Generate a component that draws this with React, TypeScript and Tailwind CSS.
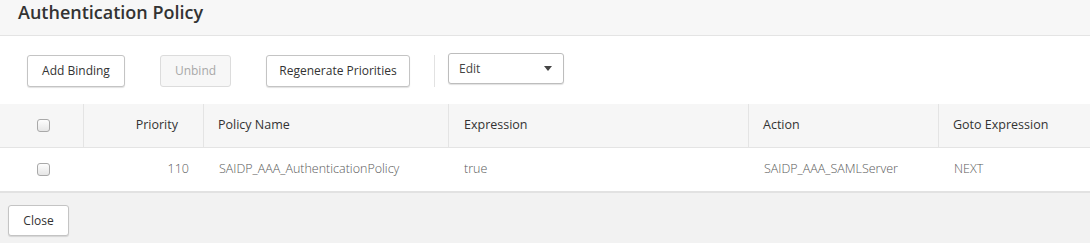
import React from "react";

const Checkbox = () => (
  <div className="w-[13px] h-[13px] rounded-[3px] border border-[#a9a9a9] bg-gradient-to-b from-[#fdfdfd] to-[#e6e6e6]" />
);

const Btn = ({ children, w, disabled }: { children: React.ReactNode; w: string; disabled?: boolean }) => (
  <div
    className={`${w} h-[32px] flex items-center justify-center rounded-[3px] border text-[12px] ${
      disabled
        ? "border-[#dcdcdc] bg-[#f7f7f7] text-[#a8a8a8]"
        : "border-[#c4c4c4] bg-white text-[#333] shadow-[0_1px_1px_rgba(0,0,0,0.12)]"
    }`}
  >
    {children}
  </div>
);

export default function App() {
  return (
    <div className="w-[1090px] h-[243px] overflow-hidden bg-white font-['Open_Sans',sans-serif] text-[#333]">
      <div className="h-[36px] bg-[#f7f7f7] border-b border-[#e4e4e4] pl-[18px]">
        <div className="text-[18px] leading-[24px] font-semibold text-[#333]">Authentication Policy</div>
      </div>
      <div className="h-[68px] flex items-start pl-[27px] pt-[19px] bg-white">
        <Btn w="w-[98px]">Add Binding</Btn>
        <div className="w-[35px]" />
        <Btn w="w-[71px]" disabled>
          Unbind
        </Btn>
        <div className="w-[35px]" />
        <Btn w="w-[144px]">Regenerate Priorities</Btn>
        <div className="ml-[24px] w-px h-[32px] bg-[#e2e2e2]" />
        <div className="ml-[13px] -mt-[2px] w-[116px] h-[31px] rounded-[3px] border border-[#bdbdbd] bg-white shadow-[0_1px_1px_rgba(0,0,0,0.12)] flex items-center justify-between pl-[10px] pr-[11px] text-[12px] text-[#444]">
          <span>Edit</span>
          <svg width="8" height="5" viewBox="0 0 8 5">
            <path d="M0 0 L8 0 L4 5 Z" fill="#444" />
          </svg>
        </div>
      </div>
      <div className="grid grid-cols-[84px_120px_245px_300px_190px_1fr] h-[44px] bg-[#f6f6f6] border-b border-[#e4e4e4] text-[12.5px] text-[#333]">
        <div className="flex items-center justify-center pl-[3px] border-r border-[#e4e4e4]">
          <Checkbox />
        </div>
        <div className="flex items-center justify-end pr-[25px] border-r border-[#e4e4e4]">Priority</div>
        <div className="flex items-center pl-[14px] border-r border-[#e4e4e4]">Policy Name</div>
        <div className="flex items-center pl-[15px] border-r border-[#e4e4e4]">Expression</div>
        <div className="flex items-center pl-[14px] border-r border-[#e4e4e4]">Action</div>
        <div className="flex items-center pl-[14px]">Goto Expression</div>
      </div>
      <div className="grid grid-cols-[84px_120px_245px_300px_190px_1fr] h-[45px] bg-white border-b-[2px] border-[#e2e2e2] text-[12.5px] font-light text-[#5a5a5a]">
        <div className="flex items-center justify-center pl-[3px]">
          <Checkbox />
        </div>
        <div className="flex items-center justify-end pr-[15px]">110</div>
        <div className="flex items-center pl-[15px]">SAIDP_AAA_AuthenticationPolicy</div>
        <div className="flex items-center pl-[15px]">true</div>
        <div className="flex items-center pl-[15px]">SAIDP_AAA_SAMLServer</div>
        <div className="flex items-center pl-[15px]">NEXT</div>
      </div>
      <div className="h-[50px] bg-[#f2f2f2] pl-[8px] pt-[12px]">
        <div className="w-[61px] h-[31px] flex items-center justify-center rounded-[3px] border border-[#c4c4c4] bg-white shadow-[0_1px_1px_rgba(0,0,0,0.12)] text-[12px] text-[#333]">
          Close
        </div>
      </div>
    </div>
  );
}
